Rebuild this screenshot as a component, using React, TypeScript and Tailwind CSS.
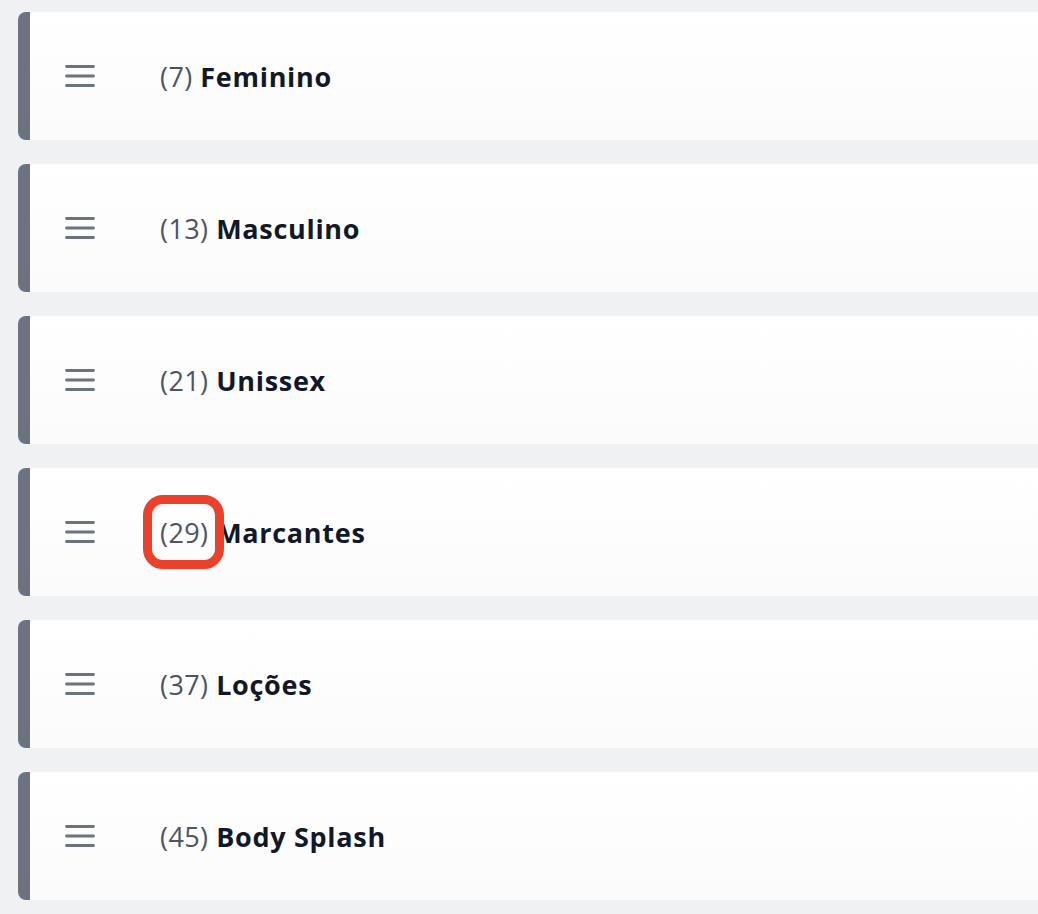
import React from "react";

const items = [
  { n: 7, name: "Feminino" },
  { n: 13, name: "Masculino" },
  { n: 21, name: "Unissex" },
  { n: 29, name: "Marcantes", highlight: true },
  { n: 37, name: "Loções" },
  { n: 45, name: "Body Splash" },
];

function Menu() {
  return (
    <svg width="30" height="22" viewBox="0 0 30 22" fill="none">
      <path d="M1.5 1.5h27M1.5 11h27M1.5 20.5h27" stroke="#6b7280" strokeWidth="2.8" strokeLinecap="round" />
    </svg>
  );
}

export default function App() {
  return (
    <div
      className="min-h-[914px] w-full bg-[#f0f1f3] pt-[12px] pl-[18px] overflow-hidden"
      style={{ fontFamily: "'Open Sans', 'Noto Sans', sans-serif" }}
    >
      <div className="flex flex-col gap-[24px]">
        {items.map((it) => (
          <div
            key={it.n}
            className="flex h-[128px] items-center rounded-l-[8px] border-l-[12px] border-[#6b7280] bg-gradient-to-b from-white to-[#fbfbfc]"
          >
            <div className="ml-[35px] flex items-center">
              <Menu />
            </div>
            <div className="ml-[65px] flex items-center text-[27px] leading-none whitespace-pre">
              <span className="relative text-[#4b5563] tracking-[0.4px]">
                ({it.n})
                {it.highlight && (
                  <span className="absolute left-[-17px] right-[-16px] top-[-24px] bottom-[-23px] rounded-[20px] border-[9px] border-[#e9412b]" />
                )}
              </span>
              <span className="font-bold text-[#111827] tracking-[0.7px]"> {it.name}</span>
            </div>
          </div>
        ))}
      </div>
    </div>
  );
}
